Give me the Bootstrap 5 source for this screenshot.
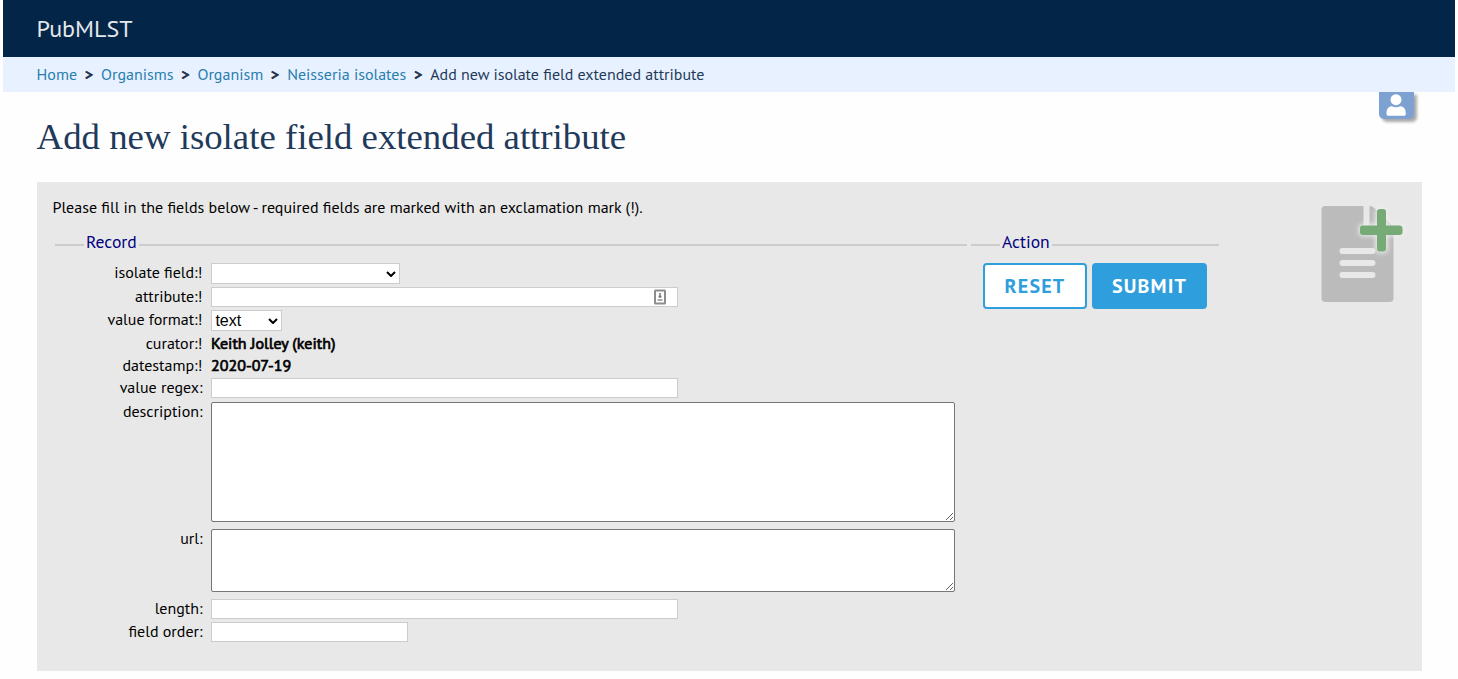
<!DOCTYPE html>
<html lang="en">
<head>
<meta charset="utf-8">
<meta name="viewport" content="width=device-width, initial-scale=1">
<title>Add new isolate field extended attribute - PubMLST</title>
<link href="https://cdn.jsdelivr.net/npm/bootstrap@5.3.0/dist/css/bootstrap.min.css" rel="stylesheet">
<style>
body{font-family:"PT Sans","Noto Sans",sans-serif;font-size:16px;line-height:20px;color:#000;background:#fefefe;overflow:hidden}
.site{margin:0 3px}
.masthead{height:57px;background:#032548;padding:0 33.6px}
.masthead .navbar-brand{font-size:24px;line-height:31px;color:#e4e8ec}
.crumbs{height:35px;background:#e7f1ff;padding:0 33.6px 2px;color:#1f3a5a}
.crumbs .breadcrumb{font-size:16px}
.crumbs a{color:#2a7eae}
.crumbs .breadcrumb-item{padding:0}
.crumbs .breadcrumb-item+.breadcrumb-item::before{content:">";-webkit-text-stroke:.8px #1f2f4a;color:#1f2f4a;padding:0;width:24px;text-align:center}
.crumbs .active{color:#1f3a5a}
.user-tab{position:absolute;right:41px;top:0;width:35px;height:27px;background:#7da2d1;border-radius:0 0 5px 5px;box-shadow:3px 3px 3px #aaa}
h1{font:400 36.8px/44px "Liberation Serif",serif;color:#1f3a5a;padding:23px 33.6px 0;height:90px;margin:0}
.panel{margin:0 33px 0 34px;height:489px;background:#e8e8e8;padding:15px 16px 0}
.intro{height:37px;margin:0 0 0 -.5px}
.group-title{height:29px;color:navy;font-size:17.6px;gap:2px;line-height:16px}
.group-title::before,.group-title::after{content:"";height:2px;background:#ccc;margin-top:10px}
.group-title::before{width:29px}
.group-title::after{flex:1}
.record{width:912px;margin-left:2px}
.action{width:248px;margin-left:4px}
.fields{display:grid;grid-template-columns:147.5px 744px;column-gap:8.5px;grid-template-rows:24px 23px 23px 22px 23px 24px 127px 70px 23px 20px}
.fields label,.fields .tag{text-align:right;line-height:18px}
.fields .form-control,.fields .form-select{border:1px solid #ccc;border-radius:0;background-color:#fff;padding:0 3px;height:20px;min-height:0;font:16px/18px "Liberation Sans",sans-serif;color:#000}
.fields .form-select{height:21px;padding-left:3.4px;line-height:18px;background-image:url("data:image/svg+xml,%3Csvg xmlns='http://www.w3.org/2000/svg' viewBox='0 0 10 6'%3E%3Cpath d='M1 1l4 4 4-4' fill='none' stroke='%23000' stroke-width='2'/%3E%3C/svg%3E");background-size:10px 6px;background-position:right 3px center}
.fields .w-attr{width:467px}
.fields textarea.form-control{border:1px solid #767676;border-radius:2px;resize:both;width:744px}
.fields textarea.tall{height:120px}
.fields textarea.short{height:63px}
.fields .tag,.fields .who{padding-top:1px}
.fields .who{-webkit-text-stroke:.7px #000;line-height:18px}
.autofill{position:absolute;left:443px;top:2px}
.act{height:46px;border:2px solid #2f9edc;border-radius:4px;font-size:20px;font-weight:700;letter-spacing:1.2px;padding:0;line-height:42px}
.act-reset{width:104px;background:#fff;color:#2f9edc}
.act-submit{width:115px;background:#2f9edc;color:#fff}
.page-icon{margin:1px -3px 0 0}
</style>
</head>
<body>
<div class="site">
  <header class="masthead navbar"><a class="navbar-brand p-0 m-0" href="#">PubMLST</a></header>
  <nav class="crumbs d-flex align-items-center" aria-label="breadcrumb">
    <ol class="breadcrumb m-0">
      <li class="breadcrumb-item"><a class="text-decoration-none" href="#">Home</a></li>
      <li class="breadcrumb-item"><a class="text-decoration-none" href="#">Organisms</a></li>
      <li class="breadcrumb-item"><a class="text-decoration-none" href="#">Organism</a></li>
      <li class="breadcrumb-item"><a class="text-decoration-none" href="#">Neisseria isolates</a></li>
      <li class="breadcrumb-item active">Add new isolate field extended attribute</li>
    </ol>
  </nav>
  <main class="position-relative">
    <div class="user-tab"><svg class="d-block" width="35" height="27" viewBox="0 0 35 27" fill="#fff"><circle cx="17" cy="7.700" r="5.500"/><path d="M7.500 21.500c0-5 2.300-7.300 5.500-7.300 1.500.8 2.700 1 4 1s2.500-.2 4-1c3.300 0 5.800 2.300 5.800 7.300 0 1.500-.7 2.300-1.900 2.300H9.400c-1.200 0-1.900-.8-1.900-2.300z"/></svg></div>
    <h1>Add new isolate field extended attribute</h1>
    <form class="panel d-flex justify-content-between">
      <div>
        <p class="intro">Please fill in the fields below - required fields are marked with an exclamation mark (!).</p>
        <div class="d-flex">
          <section class="record">
            <div class="group-title d-flex"><span>Record</span></div>
            <div class="fields">
              <label for="f1">isolate field:!</label><div><select id="f1" class="form-select" style="width:189px"><option></option></select></div>
              <label for="f2">attribute:!</label>
              <div class="position-relative"><input id="f2" class="form-control w-attr"><svg class="autofill" width="12" height="16" viewBox="0 0 12 16"><rect x="1" y="1.500" width="10" height="13" rx=".5" fill="#fff" stroke="#8c8c8c" stroke-width="2"/><path d="M6 4v5M4.500 7.500h3" stroke="#777" stroke-width="1.500"/><path d="M3.500 11h5" stroke="#aaa" stroke-width="2"/></svg></div>
              <label for="f3">value format:!</label><div><select id="f3" class="form-select" style="width:71px"><option>text</option></select></div>
              <span class="tag">curator:!</span><span class="who">Keith Jolley (keith)</span>
              <span class="tag">datestamp:!</span><span class="who">2020-07-19</span>
              <label for="f4">value regex:</label><div><input id="f4" class="form-control w-attr"></div>
              <label for="f5">description:</label><div><textarea id="f5" class="form-control tall"></textarea></div>
              <label for="f6">url:</label><div><textarea id="f6" class="form-control short"></textarea></div>
              <label for="f7">length:</label><div><input id="f7" class="form-control w-attr"></div>
              <label for="f8">field order:</label><div><input id="f8" class="form-control" style="width:197px"></div>
            </div>
          </section>
          <section class="action">
            <div class="group-title d-flex"><span>Action</span></div>
            <div class="d-flex ms-2 ps-1" style="gap:5px"><button type="reset" class="btn act act-reset">RESET</button><button type="button" class="btn act act-submit">SUBMIT</button></div>
          </section>
        </div>
      </div>
      <svg class="page-icon flex-shrink-0" width="90" height="110" viewBox="0 0 90 110">
        <defs><filter id="halo" x="-40%" y="-40%" width="180%" height="180%"><feGaussianBlur stdDeviation="2.500"/></filter></defs>
        <path d="M6.500 8h38v22q0 4 4 4h26v66q0 4-4 4h-64q-4 0-4-4V12q0-4 4-4zM50.500 8q3 0 5 2l17 17q2 2 2 5v3h-24z" fill="#bbb"/>
        <path d="M23.500 53h30M23.500 65h30M23.500 77h30" stroke="#e8e8e8" stroke-width="6" stroke-linecap="round"/>
        <g fill="#eee" filter="url(#halo)"><rect x="40" y="26" width="45" height="12" rx="4"/><rect x="56.500" y="10" width="12" height="45" rx="4"/></g>
        <g fill="#76aa76"><rect x="41" y="27.500" width="42.500" height="9.500" rx="3"/><rect x="58" y="11" width="9" height="42.500" rx="3"/></g>
      </svg>
    </form>
  </main>
</div>
<script src="https://cdn.jsdelivr.net/npm/bootstrap@5.3.0/dist/js/bootstrap.bundle.min.js"></script>
</body>
</html>
